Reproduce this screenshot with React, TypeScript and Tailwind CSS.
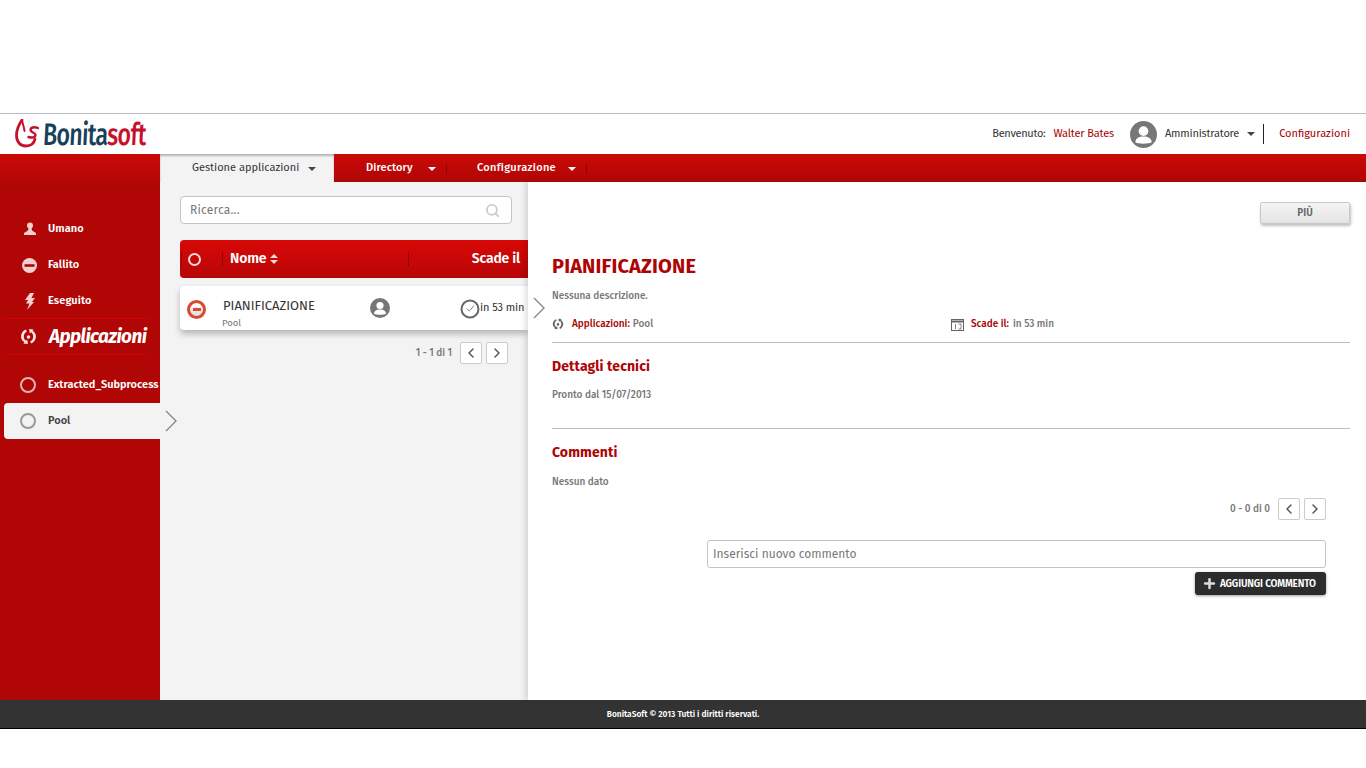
import { ChevronLeft, ChevronRight, Plus, Search } from "lucide-react";

const font = "font-['Fira_Sans','Noto_Sans','Open_Sans',sans-serif]";

function Caret({ className }: { className?: string }) {
  return (
    <svg width="8" height="4" viewBox="0 0 8 4" className={className}>
      <path d="M0 0h8L4 4z" fill="currentColor" />
    </svg>
  );
}

function Arrow({ className }: { className?: string }) {
  return (
    <svg width="12" height="22" viewBox="0 0 12 22" fill="none" stroke="#888" strokeWidth="1.400" className={className}>
      <path d="M1 1l10 10L1 21" />
    </svg>
  );
}

function AppIcon({ size = 16, className }: { size?: number; className?: string }) {
  return (
    <svg width={size} height={size} viewBox="0 0 16 16" className={className} fill="currentColor">
      <circle cx="8" cy="8.500" r="1.700" />
      <path d="M5 1.500 6.600 3C4.400 4.400 3.600 6 3.600 8s.8 3 2 4l1.200-1.200.6 4.200-4.200-.4 1-1.200C2.400 12.200 1 10.600 1 8c0-2.800 1.600-5 4-6.500z" />
      <path d="M11 14.500 9.400 13c2.200-1.400 3-3 3-5s-.8-3-2-4L9.200 5.200 8.600 1l4.200.4-1 1.200C13.600 3.800 15 5.400 15 8c0 2.800-1.600 5-4 6.500z" />
    </svg>
  );
}

function UserBadge({ size, className }: { size: number; className?: string }) {
  return (
    <svg width={size} height={size} viewBox="0 0 28 28" className={className}>
      <circle cx="14" cy="14" r="14" fill="#777" />
      <circle cx="14" cy="10.500" r="5" fill="#fff" />
      <path d="M5.500 22c.5-4.500 4-6 8.500-6s8 1.500 8.500 6c-2 1-5 1.500-8.500 1.500S7.500 23 5.500 22z" fill="#fff" />
    </svg>
  );
}

function Pager({ label }: { label: string }) {
  return (
    <div className="flex items-center justify-end">
      <span className="mr-2 text-[10px] font-medium text-[#777]">{label}</span>
      <button className="mr-1 flex h-[22px] w-[22px] items-center justify-center rounded-[2px] border border-[#ccc] bg-white text-[#555]">
        <ChevronLeft size={16} strokeWidth={2.200} />
      </button>
      <button className="flex h-[22px] w-[22px] items-center justify-center rounded-[2px] border border-[#ccc] bg-white text-[#555]">
        <ChevronRight size={16} strokeWidth={2.200} />
      </button>
    </div>
  );
}

function SideItem({ icon, label }: { icon: React.ReactNode; label: string }) {
  return (
    <div className="flex h-9 items-center">
      <div className="flex w-[48px] justify-center pl-[11px]">{icon}</div>
      <span className="whitespace-nowrap text-[11px] font-semibold tracking-[0.1px] text-white">{label}</span>
    </div>
  );
}

export default function App() {
  return (
    <div className={`${font} flex h-[768px] w-[1366px] flex-col overflow-hidden bg-white`}>
      <div className="h-[114px] shrink-0 border-b border-[#b9bec2]" />

      {/* header */}
      <header className="flex h-10 shrink-0 items-center justify-between pl-[15px] pr-4">
        <div className="flex items-center gap-[4px]">
          <svg width="24" height="30" viewBox="0 0 24 30" fill="none">
            <path d="M7 1C3.500 6 1.500 11 1.500 16.500 1.500 23 5.500 27 11 27c4.500 0 8-2.500 9-7" stroke="#c8102e" strokeWidth="2.800" strokeLinecap="round" />
            <path d="M7 1c.5 4 2 6 2.500 11" stroke="#c8102e" strokeWidth="2" strokeLinecap="round" />
            <path d="M23 9c-4-1.500-7.500-.5-7.500 2s5 2.500 5 5-4 3-7 2" stroke="#c8102e" strokeWidth="2.400" strokeLinecap="round" />
          </svg>
          <span className="origin-left whitespace-nowrap text-[31px] leading-none font-medium tracking-[-1px] [transform:scaleX(0.75)_skewX(-4deg)]">
            <span className="text-[#17405a]">Bonita</span>
            <span className="text-[#c8102e]">soft</span>
          </span>
        </div>
        <div className="flex items-center text-[11px] text-[#333]">
          <span className="mr-2 tracking-[-0.3px]">Benvenuto:</span>
          <span className="mr-4 tracking-[-0.15px] text-[#a80000]">Walter Bates</span>
          <UserBadge size={27} className="mr-2" />
          <span className="mr-2 tracking-[-0.2px]">Amministratore</span>
          <Caret className="mr-2 text-[#444]" />
          <span className="mr-[15px] h-5 w-px bg-[#222]" />
          <span className="text-[#a80000]">Configurazioni</span>
        </div>
      </header>

      <div className="flex min-h-0 flex-1">
        <aside className="relative z-20 w-40 shrink-0 bg-gradient-to-b from-[#cb0a06] from-0% to-[#b00606] to-[6%] pt-[57px]">
          <SideItem label="Umano" icon={
            <svg width="14" height="14" viewBox="0 0 14 14" fill="#f2cfcf"><circle cx="7" cy="3.500" r="3" /><path d="M5.500 6h3l.5 2.500 4 2.500v2H1v-2l4-2.500z" /></svg>
          } />
          <SideItem label="Fallito" icon={
            <svg width="15" height="15" viewBox="0 0 15 15"><circle cx="7.500" cy="7.500" r="7.500" fill="#f2cfcf" /><rect x="2.500" y="6.200" width="10" height="2.600" fill="#b00606" /></svg>
          } />
          <SideItem label="Eseguito" icon={
            <svg width="10" height="17" viewBox="0 0 10 17" fill="#f2cfcf"><path d="M5 0h4L6.500 5 10 5 7 9l2 0-7 8 2.500-6.500H1L3 7H0z" /></svg>
          } />
          <div className="-mt-px ml-1 flex h-[37px] w-[144px] items-center border-y border-[#d60000]">
            <AppIcon size={17} className="ml-[16px] mr-[12px] text-[#f8e4e4]" />
            <span className="whitespace-nowrap pt-px text-[19px] font-bold italic tracking-[-0.55px] text-white">Applicazioni</span>
          </div>
          <div className="mt-[12px] flex h-9 w-40 items-center">
            <div className="flex w-[48px] shrink-0 justify-center pl-[8px]">
              <span className="h-[16px] w-[16px] rounded-full border-2 border-[#e0b3b3]" />
            </div>
            <span className="whitespace-nowrap pt-px text-[11px] font-semibold text-white">Extracted_Subprocess</span>
          </div>
          <div className="relative ml-1 flex h-9 w-[156px] items-center rounded-l-[4px] bg-[#f3f3f3]">
            <div className="flex w-[44px] justify-center pl-[4px]">
              <span className="h-[16px] w-[16px] rounded-full border-2 border-[#999]" />
            </div>
            <span className="pt-px text-[11px] font-semibold text-[#444]">Pool</span>
            <Arrow className="absolute left-[161px] top-[7px]" />
          </div>
        </aside>

        <div className="flex min-w-0 flex-1 flex-col">
          {/* top nav */}
          <nav className="flex h-7 shrink-0 bg-gradient-to-b from-[#cb0a06] to-[#b00606] pt-px text-[11px] font-medium">
            <div className="-mt-px flex w-[174px] items-center bg-[#f3f3f3] pl-[32px] pt-px font-normal text-[#333] shadow-[inset_0_2px_2px_rgba(0,0,0,0.25)]">
              Gestione applicazioni
              <Caret className="ml-[9px] text-[#444]" />
            </div>
            <div className="flex w-[113px] items-center pl-[32px] text-white">
              <span className="tracking-[0.1px]">Directory</span>
              <Caret className="ml-[15px]" />
              <span className="ml-auto h-[10px] w-px bg-[#8f0000]" />
            </div>
            <div className="flex w-[140px] items-center pl-[30px] text-white">
              <span className="tracking-[0.3px]">Configurazione</span>
              <Caret className="ml-[12px]" />
              <span className="ml-auto h-[10px] w-px bg-[#8f0000]" />
            </div>
          </nav>

          <div className="flex min-h-0 flex-1">
            {/* task list */}
            <section className="w-[368px] shrink-0 overflow-hidden bg-[#f3f3f3] pl-5 pt-[14px]">
              <div className="flex h-7 w-[332px] items-center justify-between rounded-[4px] border border-[#c4c4c4] bg-white pl-[9px] pr-[11px] text-[12px] tracking-[0.2px] text-[#777]">
                Ricerca...
                <Search size={15} strokeWidth={3} className="text-[#ccc]" />
              </div>
              <div className="mt-[16px] flex h-[38px] items-center rounded-l-[4px] bg-gradient-to-b from-[#d80808] to-[#b80606] text-[14px] font-semibold tracking-[-0.2px] text-white">
                <span className="ml-px h-[14px] w-px bg-[#900000]" />
                <span className="ml-[6px] h-[13px] w-[13px] rounded-full border-2 border-[#f8dcdc]" />
                <span className="ml-[21px] h-[14px] w-px bg-[#900000]" />
                <span className="ml-[7px] pb-px">Nome</span>
                <svg width="8" height="10" viewBox="0 0 8 10" fill="#f4d6d6" className="ml-[4px]"><path d="M4 0l4 4H0zM4 10 0 6h8z" /></svg>
                <span className="ml-[130px] h-[14px] w-px bg-[#900000]" />
                <span className="ml-auto pb-px pr-[8px]">Scade il</span>
              </div>
              <div className="relative mt-2 flex h-11 items-center rounded-l-[4px] bg-white shadow-[0_4px_6px_rgba(0,0,0,0.25)]">
                <span className="absolute left-[7px] top-[14px] flex h-[19px] w-[19px] items-center justify-center rounded-full border-[3px] border-[#d84a2e] bg-gradient-to-b from-white to-[#ddd]">
                  <span className="h-[2.500px] w-[8px] bg-[#d84a2e]" />
                </span>
                <span className="absolute left-[43px] top-[10px] text-[13px] text-[#333]">PIANIFICAZIONE</span>
                <span className="absolute left-[42px] top-[30px] text-[9.500px] text-[#777]">Pool</span>
                <UserBadge size={20} className="absolute left-[190px] top-[12px]" />
                <svg width="20" height="20" viewBox="0 0 20 20" fill="none" stroke="#666" className="absolute left-[280px] top-[13px]">
                  <circle cx="10" cy="10" r="8.500" strokeWidth="2" />
                  <path d="M6.500 9.500 9.500 12 14 6.500" strokeWidth="0.800" />
                </svg>
                <span className="absolute left-[300px] top-[14px] whitespace-nowrap text-[11px] tracking-[-0.1px] text-[#333]">in 53 min</span>
              </div>
              <div className="mt-[12px] pr-5">
                <Pager label="1 - 1 di 1" />
              </div>
            </section>

            {/* detail panel */}
            <main className="relative z-10 flex-1 bg-white pl-6 pr-4 pt-5 shadow-[-3px_0_5px_rgba(0,0,0,0.12)]">
              <Arrow className="absolute left-[5px] top-[115px]" />
              <div className="flex justify-end">
                <button className="h-[22px] w-[90px] rounded-[2px] border border-[#c8c8c8] bg-gradient-to-b from-[#f4f4f4] to-[#e4e4e4] text-[10px] font-semibold text-[#666] shadow-[1px_2px_3px_rgba(0,0,0,0.25)]">
                  PIÙ
                </button>
              </div>
              <h1 className="mt-[30px] text-[20px] leading-[24px] font-bold tracking-[0.15px] text-[#ad0505]">PIANIFICAZIONE</h1>
              <p className="mt-[12px] text-[10px] leading-[12px] font-medium text-[#777]">Nessuna descrizione.</p>
              <div className="mt-[15px] flex h-[14px] items-center text-[10px] font-medium">
                <div className="flex w-[399px] items-center">
                  <AppIcon size={12} className="mr-2 text-[#666]" />
                  <span className="mr-[3px] text-[#a80000]">Applicazioni:</span>
                  <span className="text-[#777]">Pool</span>
                </div>
                <svg width="13" height="13" viewBox="0 0 13 13" fill="none" stroke="#666" className="mr-[7px]">
                  <rect x="0.500" y="1.500" width="12" height="11" />
                  <path d="M0 3.500h13" strokeWidth="2" />
                  <path d="M4.500 6v5M7.500 6h2.500v5H7.500" strokeWidth="0.800" />
                </svg>
                <span className="mr-1 text-[#a80000]">Scade il:</span>
                <span className="text-[#777]">in 53 min</span>
              </div>
              <div className="mt-[11px] border-t border-[#bdbdbd]" />
              <h2 className="mt-[15px] text-[14px] leading-[18px] font-bold tracking-[0.1px] text-[#ad0505]">Dettagli tecnici</h2>
              <p className="mt-[13px] text-[10px] leading-[12px] font-medium text-[#777]">Pronto dal 15/07/2013</p>
              <div className="mt-[27px] border-t border-[#bdbdbd]" />
              <h2 className="mt-[15px] text-[14px] leading-[18px] font-bold tracking-[0.1px] text-[#ad0505]">Commenti</h2>
              <p className="mt-[14px] text-[10px] leading-[12px] font-medium text-[#777]">Nessun dato</p>
              <div className="mr-6 mt-[10px]">
                <Pager label="0 - 0 di 0" />
              </div>
              <div className="ml-[155px] mr-6 mt-[20px]">
                <div className="flex h-7 items-center rounded-[3px] border border-[#c4c4c4] pl-[5px] text-[12px] text-[#777]">
                  Inserisci nuovo commento
                </div>
                <div className="mt-1 flex justify-end">
                  <button className="flex h-[23px] w-[131px] items-center gap-[3px] rounded-[3px] bg-[#2c2c2c] pl-[7px] text-[10px] font-semibold tracking-[-0.15px] text-white shadow-[0_1px_3px_rgba(0,0,0,0.4)]">
                    <Plus size={15} strokeWidth={4} className="text-[#ddd]" />
                    <span className="pt-px">AGGIUNGI COMMENTO</span>
                  </button>
                </div>
              </div>
            </main>
          </div>
        </div>
      </div>

      <footer className="flex h-[29px] shrink-0 items-center justify-center border-b border-black bg-[#333] pt-px text-[8.400px] font-semibold text-white">
        BonitaSoft © 2013 Tutti i diritti riservati.
      </footer>
      <div className="h-[39px] shrink-0" />
    </div>
  );
}
